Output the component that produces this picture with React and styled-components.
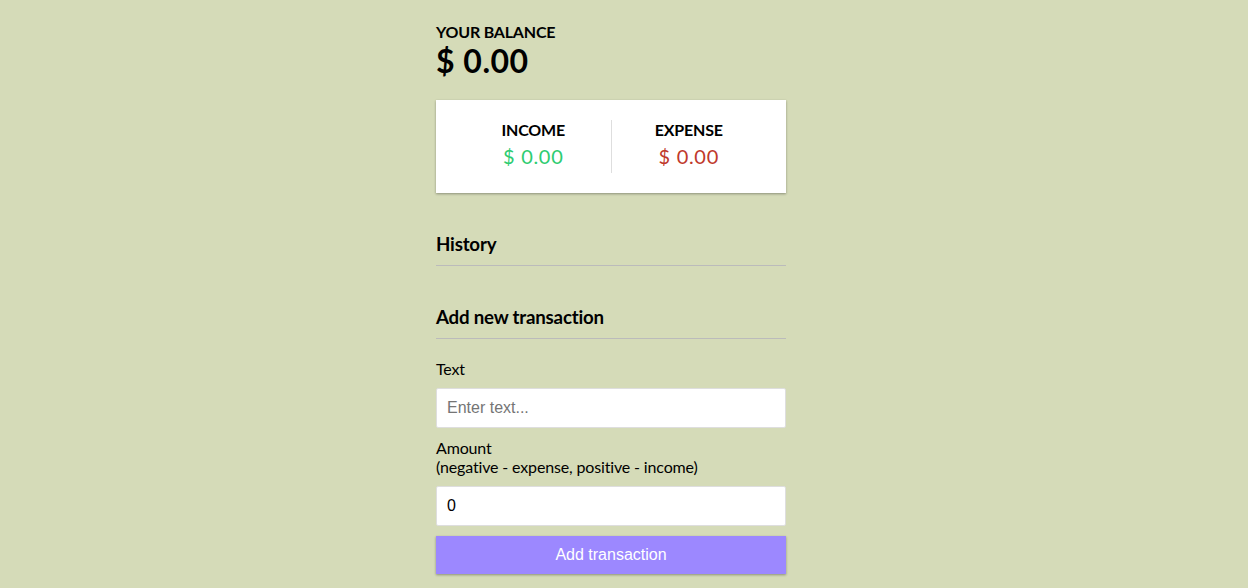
import React, { useState } from 'react';
import styled, { createGlobalStyle } from 'styled-components';

const GlobalStyle = createGlobalStyle`
  * { box-sizing: border-box; }
  body {
    margin: 0;
    background-color: #d5dbb8;
    font-family: Lato, "Noto Sans", sans-serif;
    letter-spacing: -0.15px;
    color: #000;
  }
`;

const shadow = '0 1px 3px rgba(0,0,0,0.12), 0 1px 2px rgba(0,0,0,0.24)';

const Page = styled.div`
  display: flex;
  justify-content: center;
  padding: 22px 26px 0 0;
`;

const Container = styled.div`
  width: 350px;
`;

const SmallTitle = styled.h4`
  margin: 0;
  font-size: 16px;
  font-weight: 700;
  letter-spacing: -0.2px;
  text-transform: uppercase;
`;

const Balance = styled.h1`
  margin: 0;
  font-size: 32px;
  font-weight: 700;
  letter-spacing: 0.5px;
`;

const IncExp = styled.div`
  display: flex;
  justify-content: space-between;
  background: #fff;
  box-shadow: ${shadow};
  padding: 20px;
  margin: 20px 0;
`;

const IncExpCol = styled.div`
  flex: 1;
  text-align: center;
  &:first-of-type {
    border-right: 1px solid #dedede;
  }
`;

const Money = styled.p`
  margin: 5px 0;
  font-size: 20px;
  letter-spacing: 0.7px;
  color: ${({ $type }) => ($type === 'plus' ? '#2ecc71' : '#c0392b')};
`;

const SectionTitle = styled.h3`
  margin: 40px 0 10px;
  padding-bottom: 10px;
  border-bottom: 1px solid #bbb;
  font-size: 18.72px;
  font-weight: 700;
  letter-spacing: -0.2px;
`;

const List = styled.ul`
  list-style-type: none;
  padding: 0;
  margin: 0 0 40px;
`;

const FormControl = styled.div``;

const Label = styled.label`
  display: inline-block;
  margin: 10px 0;
  font-size: 16px;
`;

const Input = styled.input`
  display: block;
  width: 100%;
  font-family: "Liberation Sans", Arial, sans-serif;
  font-size: 16px;
  letter-spacing: normal;
  padding: 10px;
  border: 1px solid #dedede;
  border-radius: 2px;
  background: #fff;
  color: #000;
  outline: none;
  &::placeholder {
    color: #757575;
  }
  &::-webkit-inner-spin-button,
  &::-webkit-outer-spin-button {
    -webkit-appearance: none;
    margin: 0;
  }
`;

const Button = styled.button`
  display: block;
  width: 100%;
  margin: 10px 0 30px;
  padding: 10px;
  border: 0;
  background-color: #9c88ff;
  box-shadow: ${shadow};
  color: #fff;
  font-family: "Liberation Sans", Arial, sans-serif;
  font-size: 16px;
  letter-spacing: normal;
  cursor: pointer;
`;

export default function App() {
  const [text, setText] = useState('');
  const [amount, setAmount] = useState(0);

  return (
    <Page>
      <GlobalStyle />
      <Container>
        <SmallTitle>Your Balance</SmallTitle>
        <Balance>$ 0.00</Balance>

        <IncExp>
          <IncExpCol>
            <SmallTitle>Income</SmallTitle>
            <Money $type="plus">$ 0.00</Money>
          </IncExpCol>
          <IncExpCol>
            <SmallTitle>Expense</SmallTitle>
            <Money $type="minus">$ 0.00</Money>
          </IncExpCol>
        </IncExp>

        <SectionTitle>History</SectionTitle>
        <List />

        <SectionTitle>Add new transaction</SectionTitle>
        <form onSubmit={(e) => e.preventDefault()}>
          <FormControl>
            <Label htmlFor="text">Text</Label>
            <Input
              id="text"
              type="text"
              value={text}
              onChange={(e) => setText(e.target.value)}
              placeholder="Enter text..."
            />
          </FormControl>
          <FormControl>
            <Label htmlFor="amount">
              Amount <br />
              (negative - expense, positive - income)
            </Label>
            <Input
              id="amount"
              type="number"
              value={amount}
              onChange={(e) => setAmount(e.target.value)}
              placeholder="Enter amount..."
            />
          </FormControl>
          <Button>Add transaction</Button>
        </form>
      </Container>
    </Page>
  );
}
